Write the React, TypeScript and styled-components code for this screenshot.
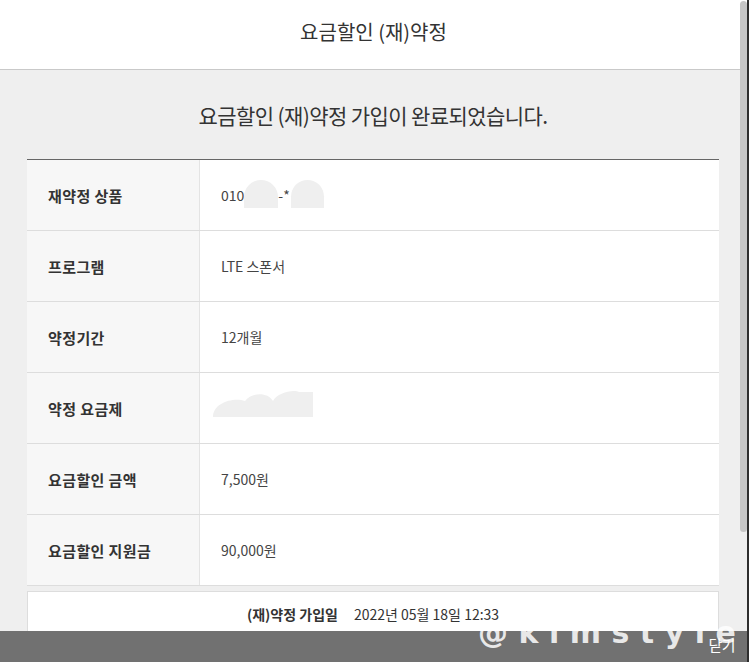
import React from "react";
import styled, { createGlobalStyle } from "styled-components";

const Global = createGlobalStyle`
  html, body { margin: 0; padding: 0; background: #ffffff; }
  body { font-family: "Noto Sans CJK KR", "Noto Sans", sans-serif; }
  * { box-sizing: border-box; }
`;

const Root = styled.div`
  position: relative;
  width: 749px;
  height: 662px;
  display: flex;
  flex-direction: column;
  border-right: 2px solid #2e2e2e;
  overflow: hidden;
`;

const Main = styled.div`
  position: relative;
  flex: 1;
  overflow: hidden;
  background: #efefef;
`;

const Header = styled.header`
  height: 70px;
  background: #ffffff;
  border-bottom: 1px solid #c9c9c9;
  display: flex;
  align-items: center;
  justify-content: center;
  font-size: 20px;
  letter-spacing: 0;
  color: #333333;
  padding-bottom: 6px;
`;

const Body = styled.div`
  padding: 0 28px 40px 27px;
`;

const Message = styled.p`
  margin: 0;
  padding: 30px 0 29px;
  height: 89px;
  text-align: center;
  font-size: 21px;
  line-height: 30px;
  letter-spacing: -0.6px;
  color: #333333;
`;

const Table = styled.div`
  border-top: 1px solid #666666;
  display: flex;
  flex-direction: column;
`;

const Row = styled.div`
  display: grid;
  grid-template-columns: 173px 1fr;
  height: 71px;
  border-bottom: 1px solid #dddddd;
`;

const Label = styled.div`
  background: #f7f7f7;
  border-right: 1px solid #e4e4e4;
  display: flex;
  align-items: center;
  padding-left: 21px;
  font-size: 15px;
  font-weight: 700;
  color: #333333;
  letter-spacing: 0.4px;
`;

const Value = styled.div`
  background: #ffffff;
  display: flex;
  align-items: center;
  padding-left: 21px;
  font-size: 14px;
  color: #444444;
  letter-spacing: 0;
`;

const Blob = styled.span<{ $w: number; $ml?: number }>`
  display: inline-block;
  width: ${(p) => p.$w}px;
  height: 28px;
  border-radius: 17px 17px 0 0;
  background: #efefef;
  margin-left: ${(p) => p.$ml ?? 0}px;
  margin-top: -2px;
`;

const Mask = styled.svg`
  display: block;
  margin-left: -8px;
  margin-top: -10px;
`;

const DateBox = styled.div`
  margin-top: 5px;
  background: #ffffff;
  border: 1px solid #dddddd;
  padding: 12px 0 14px;
  display: flex;
  justify-content: center;
  gap: 16px;
  font-size: 14px;
  line-height: 20px;
  color: #333333;
  letter-spacing: 0;
`;

const DateLabel = styled.span`
  font-weight: 700;
  color: #333333;
`;

const Thumb = styled.div`
  position: absolute;
  right: 0px;
  top: 1px;
  width: 7px;
  height: 531px;
  border-radius: 4px;
  background: #c6c6c6;
`;

const BottomBar = styled.footer`
  height: 31px;
  background: #717171;
  display: flex;
  align-items: center;
  justify-content: flex-end;
  padding: 0 12px 4px 0;
`;

const Close = styled.span`
  position: relative;
  z-index: 2;
  font-size: 15px;
  color: #ffffff;
  letter-spacing: -0.5px;
`;

const Watermark = styled.div`
  position: absolute;
  left: 478px;
  top: 615px;
  font-family: "DejaVu Sans", sans-serif;
  font-weight: 700;
  font-size: 30px;
  line-height: 36px;
  letter-spacing: 10.5px;
  color: rgba(255, 255, 255, 0.85);
  pointer-events: none;
`;

const rows: { label: string; value: React.ReactNode }[] = [
  {
    label: "재약정 상품",
    value: (
      <>
        010
        <Blob $w={34} $ml={0} />
        <span>-*</span>
        <Blob $w={33} $ml={1} />
      </>
    ),
  },
  { label: "프로그램", value: "LTE 스폰서" },
  { label: "약정기간", value: "12개월" },
  {
    label: "약정 요금제",
    value: (
      <Mask width="100" height="28" viewBox="0 0 100 28">
        <path
          d="M0 28 C0 14 20 8 32 12 C38 4 54 2 60 12 C64 4 80 0 86 3 L100 3 L100 28 Z"
          fill="#efefef"
        />
      </Mask>
    ),
  },
  { label: "요금할인 금액", value: "7,500원" },
  { label: "요금할인 지원금", value: "90,000원" },
];

export default function App() {
  return (
    <>
      <Global />
      <Root>
        <Main>
          <Header>요금할인 (재)약정</Header>
          <Body>
            <Message>요금할인 (재)약정 가입이 완료되었습니다.</Message>
            <Table>
              {rows.map((r) => (
                <Row key={r.label}>
                  <Label>{r.label}</Label>
                  <Value>{r.value}</Value>
                </Row>
              ))}
            </Table>
            <DateBox>
              <DateLabel>(재)약정 가입일</DateLabel>
              <span>2022년 05월 18일 12:33</span>
            </DateBox>
          </Body>
          <Thumb />
        </Main>
        <BottomBar>
          <Close>닫기</Close>
        </BottomBar>
        <Watermark>@kimstyle</Watermark>
      </Root>
    </>
  );
}
